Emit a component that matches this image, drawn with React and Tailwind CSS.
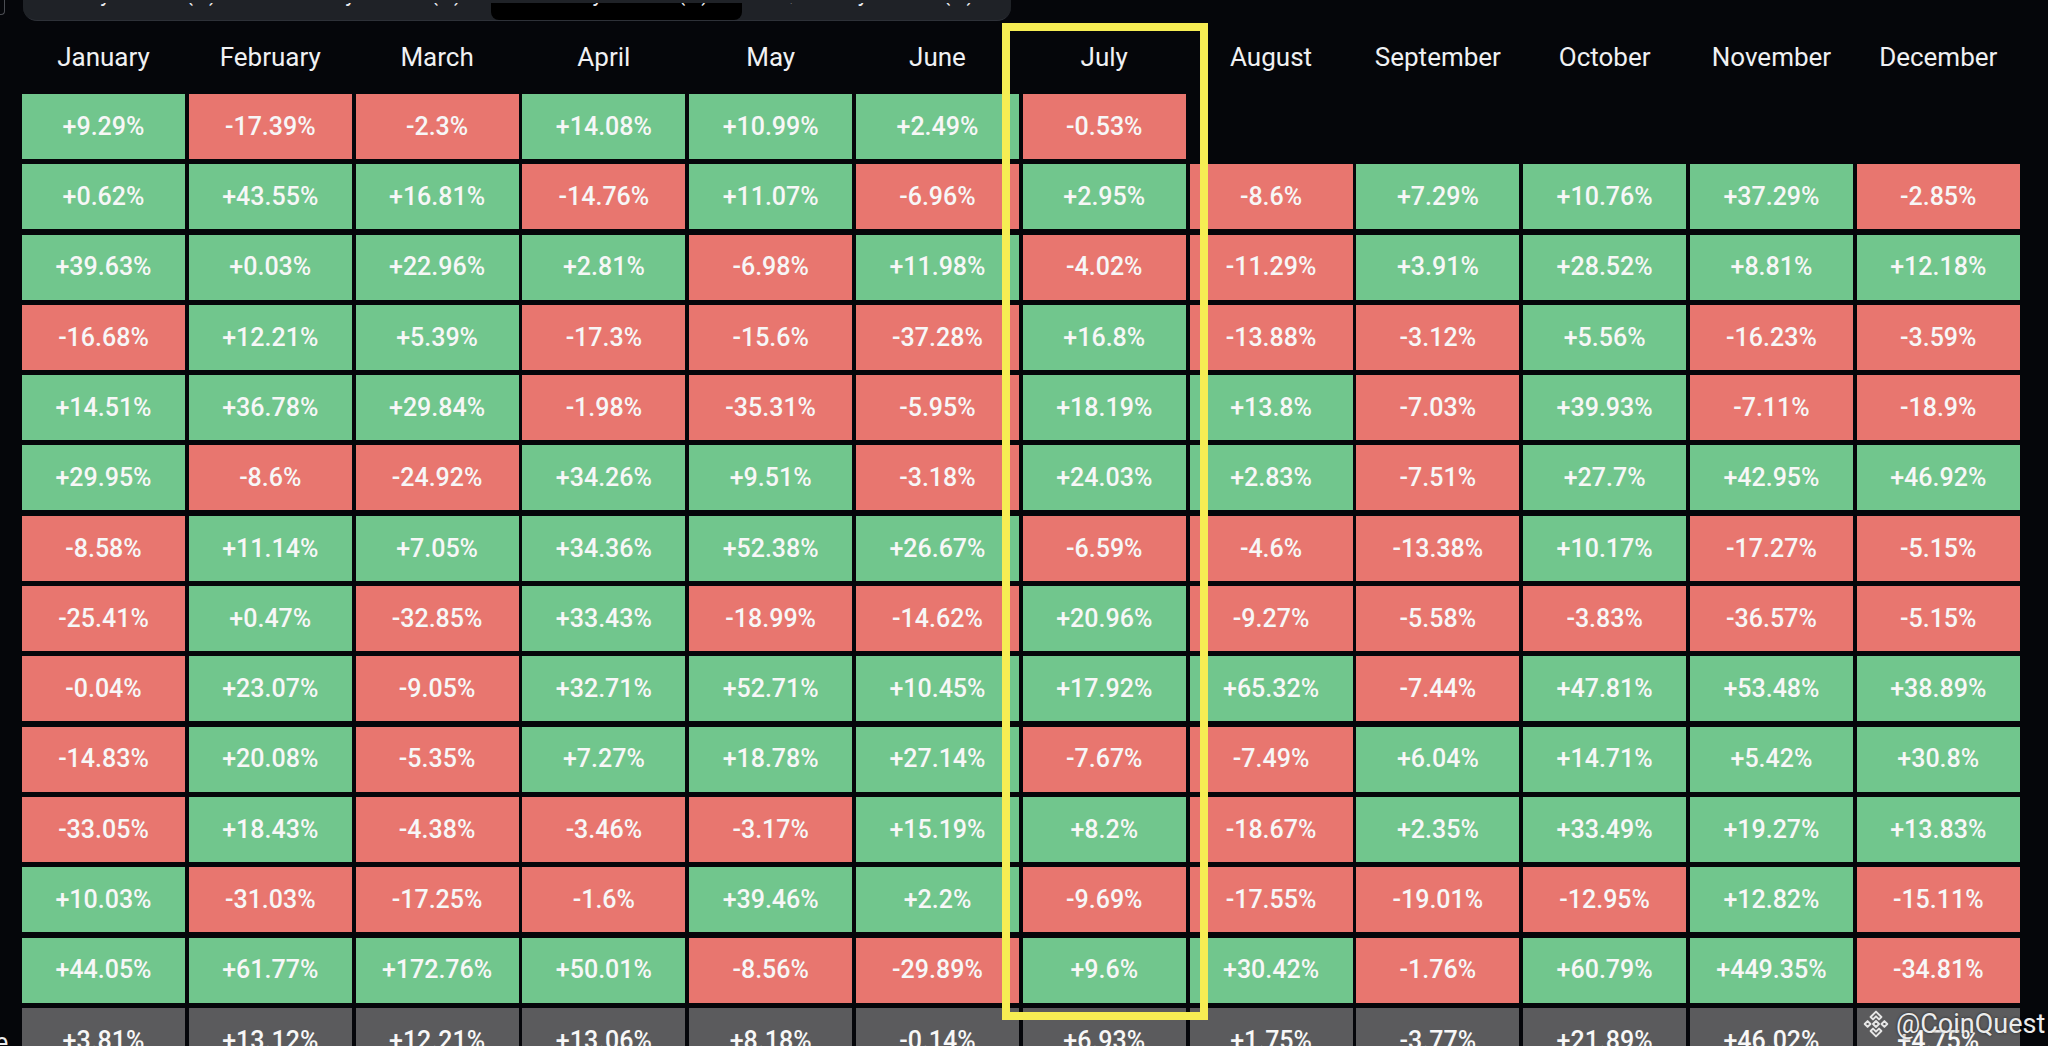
import React from 'react';

const months = ['January', 'February', 'March', 'April', 'May', 'June', 'July', 'August', 'September', 'October', 'November', 'December'];

// monthly returns, newest year first
const rows = [
  ['+9.29', '-17.39', '-2.3', '+14.08', '+10.99', '+2.49', '-0.53'],
  ['+0.62', '+43.55', '+16.81', '-14.76', '+11.07', '-6.96', '+2.95', '-8.6', '+7.29', '+10.76', '+37.29', '-2.85'],
  ['+39.63', '+0.03', '+22.96', '+2.81', '-6.98', '+11.98', '-4.02', '-11.29', '+3.91', '+28.52', '+8.81', '+12.18'],
  ['-16.68', '+12.21', '+5.39', '-17.3', '-15.6', '-37.28', '+16.8', '-13.88', '-3.12', '+5.56', '-16.23', '-3.59'],
  ['+14.51', '+36.78', '+29.84', '-1.98', '-35.31', '-5.95', '+18.19', '+13.8', '-7.03', '+39.93', '-7.11', '-18.9'],
  ['+29.95', '-8.6', '-24.92', '+34.26', '+9.51', '-3.18', '+24.03', '+2.83', '-7.51', '+27.7', '+42.95', '+46.92'],
  ['-8.58', '+11.14', '+7.05', '+34.36', '+52.38', '+26.67', '-6.59', '-4.6', '-13.38', '+10.17', '-17.27', '-5.15'],
  ['-25.41', '+0.47', '-32.85', '+33.43', '-18.99', '-14.62', '+20.96', '-9.27', '-5.58', '-3.83', '-36.57', '-5.15'],
  ['-0.04', '+23.07', '-9.05', '+32.71', '+52.71', '+10.45', '+17.92', '+65.32', '-7.44', '+47.81', '+53.48', '+38.89'],
  ['-14.83', '+20.08', '-5.35', '+7.27', '+18.78', '+27.14', '-7.67', '-7.49', '+6.04', '+14.71', '+5.42', '+30.8'],
  ['-33.05', '+18.43', '-4.38', '-3.46', '-3.17', '+15.19', '+8.2', '-18.67', '+2.35', '+33.49', '+19.27', '+13.83'],
  ['+10.03', '-31.03', '-17.25', '-1.6', '+39.46', '+2.2', '-9.69', '-17.55', '-19.01', '-12.95', '+12.82', '-15.11'],
  ['+44.05', '+61.77', '+172.76', '+50.01', '-8.56', '-29.89', '+9.6', '+30.42', '-1.76', '+60.79', '+449.35', '-34.81'],
];

const average = ['+3.81', '+13.12', '+12.21', '+13.06', '+8.18', '-0.14', '+6.93', '+1.75', '-3.77', '+21.89', '+46.02', '+4.75'];

const tabs = [
  { label: 'Daily returns(%)', w: 'w-[234px]' },
  { label: 'Weekly returns(%)', w: 'w-[234px]' },
  { label: 'Monthly returns(%)', w: 'w-[251px]', active: true },
  { label: 'Quarterly returns(%)', w: 'w-[269px]' },
];

function BinanceMark() {
  return (
    <svg width="28" height="28" viewBox="0 0 26 26" fill="none" stroke="#e6e6e6" strokeWidth="1.8" strokeLinejoin="round">
      <path d="M13 1.5 L18 6.5 L15.8 8.7 L13 5.9 L10.2 8.7 L8 6.5 Z" />
      <path d="M13 24.5 L18 19.5 L15.8 17.3 L13 20.1 L10.2 17.3 L8 19.5 Z" />
      <path d="M2.5 13 L5.2 10.3 L7.9 13 L5.2 15.7 Z" />
      <path d="M18.1 13 L20.8 10.3 L23.5 13 L20.8 15.7 Z" />
      <path d="M13 10.2 L15.8 13 L13 15.8 L10.2 13 Z" />
    </svg>
  );
}

function Cell({ value, tone }) {
  let bg = 'bg-[#5b5b5d]';
  if (tone !== 'avg') bg = value.startsWith('-') ? 'bg-[#e8766f]' : 'bg-[#71c68d]';
  return (
    <div className={`${bg} flex items-center justify-center text-[25px] font-medium text-[#f7f7f7]`}>
      {value}%
    </div>
  );
}

export default function App() {
  return (
    <div className="relative w-[2048px] h-[1046px] overflow-hidden bg-[#05060a] font-['Roboto','Liberation_Sans',sans-serif]">
      {/* cut-off tab strip at the top */}
      <div className="flex h-[21px]">
        <div className="w-[5px] h-[15px] border-r border-b border-[#4a4c52] rounded-br-[4px]" />
        <div className="ml-[18px] flex w-[988px] h-full bg-[#1f2227] rounded-b-[14px] border-b border-[#2e3138] overflow-hidden">
          {tabs.map((t) => (
            <div key={t.label} className={`${t.w} h-full flex flex-col justify-end`}>
              <div className={`h-[17px] flex justify-center items-end overflow-hidden rounded-b-[8px] ${t.active ? 'bg-black' : ''}`}>
                <span className="text-[22px] leading-[22px] text-[#eaecef] whitespace-nowrap mb-[15px]">{t.label}</span>
              </div>
            </div>
          ))}
        </div>
      </div>

      {/* month headers */}
      <div className="grid grid-cols-[18.2px_repeat(12,163px)] gap-x-[3.8px] h-[73px] items-center">
        <div />
        {months.map((m) => (
          <div key={m} className="text-center text-[26px] text-[#f0f1f3] pb-[1px]">{m}</div>
        ))}
      </div>

      {/* returns table */}
      <div className="grid grid-cols-[18.2px_repeat(12,163px)] gap-x-[3.8px] gap-y-[5.3px] auto-rows-[65px]">
        {rows.map((r, i) => (
          <React.Fragment key={i}>
            <div />
            {months.map((m, j) => (r[j] ? <Cell key={m} value={r[j]} /> : <div key={m} />))}
          </React.Fragment>
        ))}
        <div className="flex items-center justify-end overflow-hidden pr-[10px] pt-[4px]">
          <span className="text-[25px] text-[#eaecef] whitespace-nowrap">Average</span>
        </div>
        {average.map((v, j) => (
          <Cell key={j} value={v} tone="avg" />
        ))}
      </div>

      {/* highlight around July */}
      <div className="absolute left-[1002px] top-[23px] w-[206px] h-[997px] border-[8px] border-[#f6ed53] pointer-events-none" />

      {/* watermark */}
      <div className="absolute left-[1862px] top-[1004px] flex items-center gap-[6px] text-[27px] text-[#ececec] whitespace-nowrap [text-shadow:0_0_3px_rgba(0,0,0,0.6)]">
        <BinanceMark />
        <span>@CoinQuest</span>
      </div>
    </div>
  );
}
